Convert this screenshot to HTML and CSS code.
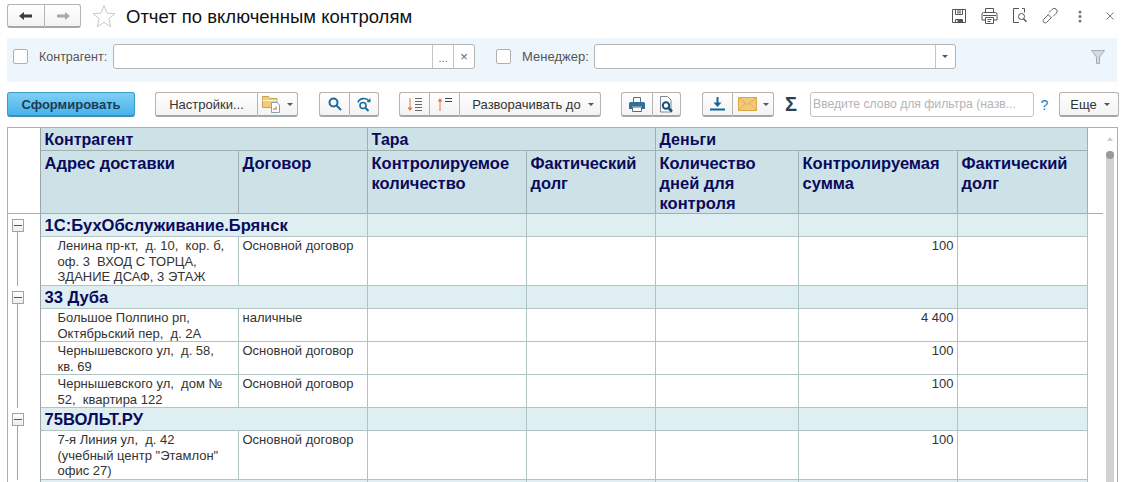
FILE: index.html
```html
<!DOCTYPE html>
<html lang="ru">
<head>
<meta charset="utf-8">
<title>Отчет по включенным контролям</title>
<link rel="stylesheet" href="styles.css">
</head>
<body>
<header class="head">
  <div class="btn-group nav">
    <button class="btn nav-btn"><svg width="16" height="10" viewBox="0 0 16 10"><path d="M1 5l5-4v2.500h8v3H6V9z" fill="#3c3c3c"/></svg></button>
    <button class="btn nav-btn"><svg width="16" height="10" viewBox="0 0 16 10"><path d="M15 5l-5-4v2.500H2v3h8V9z" fill="#a8a8a8"/></svg></button>
  </div>
  <svg class="star" width="24" height="24" viewBox="0 0 24 24"><path d="M12 1.500l3 7.600 8 .6-6.200 5.100 2 7.900L12 18.400 5.200 22.700l2-7.900L1 9.700l8-.6z" fill="none" stroke="#c8c8c8"/></svg>
  <h1 class="title">Отчет по включенным контролям</h1>
  <div class="head-tools">
    <svg width="16" height="16" viewBox="0 0 16 16" fill="none" stroke="#555"><path d="M1.500 1.500h13v13h-13zM4.500 1.500v5h7v-5M6 3h4M6 4.800h4M4.500 14.500v-3h7v3"/><path d="M7 12h4v2.500H7z" fill="#555"/></svg>
    <svg width="17" height="16" viewBox="0 0 17 16" fill="none" stroke="#555"><path d="M4.500 4.500v-4h8v4M1 12V6a1.500 1.500 0 0 1 1.500-1.500h12A1.500 1.500 0 0 1 16 6v6h-3.500M4.500 12H1M4.500 9.500h8v6h-8zM6.500 11.500h4M6.500 13.500h3M2 7.500h13"/></svg>
    <svg width="16" height="16" viewBox="0 0 16 16" fill="none" stroke="#555"><path d="M7 .5H1.500v14H7M10 .5h2.500v4"/><circle cx="9.500" cy="8.500" r="3"/><path d="M11.500 10.800l3 3" stroke-width="1.500"/></svg>
    <svg width="16" height="16" viewBox="0 0 16 16" fill="none" stroke="#666"><path d="M6.500 6.500l-4.800 4.800a2 2 0 0 0 3 3l4.800-4.800M6 6.500l3.500 3.500M7 4.500l3-3a2.200 2.200 0 0 1 4.500 3.500l-3.500 3.500"/></svg>
    <svg class="dots" width="4" height="13" viewBox="0 0 4 13" fill="#777"><circle cx="2" cy="2" r="1.500"/><circle cx="2" cy="6.500" r="1.500"/><circle cx="2" cy="11" r="1.500"/></svg>
    <svg class="close" width="8" height="8" viewBox="0 0 8 8" stroke="#777" fill="none"><path d="M.5.500l7 7M7.500.500l-7 7"/></svg>
  </div>
</header>

<section class="filters">
  <label class="check"></label>
  <span class="f-label f-label-1">Контрагент:</span>
  <div class="field field-1"><span class="f-input"></span><span class="f-btn f-dots">...</span><span class="f-btn f-x">×</span></div>
  <label class="check check-2"></label>
  <span class="f-label f-label-2">Менеджер:</span>
  <div class="field field-2"><span class="f-input"></span><span class="f-btn f-drop"><i class="caret"></i></span></div>
  <svg class="funnel" width="14" height="14" viewBox="0 0 14 14"><path d="M.5.500h13L8.500 7v6.500h-3V7z" fill="#d5dbdf" stroke="#a5adb2"/></svg>
</section>

<section class="toolbar">
  <button class="btn primary">Сформировать</button>
  <div class="btn-group g-set">
    <button class="btn b-set">Настройки...</button>
    <button class="btn b-folder">
      <svg width="20" height="18" viewBox="0 0 20 18"><path d="M.5 1.500h6l1.500 2h7v9H.5z" fill="#f0cd78" stroke="#c9a24b"/><path d="M.5 5.500h14.500" stroke="#fff3c8"/><path d="M9.500 7.500h5.500l2.500 2.500v7.500h-8z" fill="#fff" stroke="#8aa0ad"/><path d="M12 15v-2M14 15v-3.500" stroke="#c0504d"/></svg>
      <i class="caret"></i>
    </button>
  </div>
  <div class="btn-group g-find">
    <button class="btn b-icon"><svg width="14" height="14" viewBox="0 0 14 14" fill="none" stroke="#1f6a9a" stroke-width="2"><circle cx="5.500" cy="5.500" r="4"/><path d="M8.500 8.500l4.500 4.500"/></svg></button>
    <button class="btn b-icon"><svg width="15" height="15" viewBox="0 0 15 15" fill="none" stroke="#1f6a9a" stroke-width="1.600"><path d="M1 5.500a6 5 0 0 1 11-1.500"/><path d="M13.500 1v4.200H9.500z" fill="#1f6a9a" stroke="none"/><circle cx="6" cy="8.500" r="3"/><path d="M8.500 11l3 3" stroke-width="2"/></svg></button>
  </div>
  <div class="btn-group g-sort">
    <button class="btn b-sort"><svg width="16" height="15" viewBox="0 0 16 15" fill="none"><path d="M3 1v12" stroke="#e0783c"/><path d="M.5 10.500L3 14l2.500-3.500z" fill="#e0783c"/><path d="M8 1.500h7M8 4.500h7M8 7.500h7M8 10.500h7M8 13.500h7" stroke="#666"/></svg></button>
    <button class="btn b-sort"><svg width="16" height="15" viewBox="0 0 16 15" fill="none"><path d="M3 14V2" stroke="#e0783c"/><path d="M.5 4.500L3 1l2.500 3.500z" fill="#e0783c"/><path d="M8 1.500h7M8 4.500h7" stroke="#444"/></svg></button>
    <button class="btn b-expand">Разворачивать до<i class="caret"></i></button>
  </div>
  <div class="btn-group g-print">
    <button class="btn b-print"><svg width="16" height="15" viewBox="0 0 16 15"><path d="M4.500 5V.5h7V5" fill="#fff" stroke="#5b6b78"/><path d="M0 6.500A1.500 1.500 0 0 1 1.500 5h13A1.500 1.500 0 0 1 16 6.500V12h-3V9.500H3V12H0z" fill="#2f6f9c"/><path d="M3.500 10h9v4.500h-9z" fill="#fff" stroke="#5b6b78"/></svg></button>
    <button class="btn b-prev"><svg width="15" height="17" viewBox="0 0 15 17" fill="none"><path d="M1.500.5h7l3.500 3.500v12H1.500z" fill="#fff" stroke="#7a8a96"/><circle cx="7" cy="9.500" r="3.200" stroke="#17527a" stroke-width="2"/><path d="M9.500 12l3.500 3.500" stroke="#17527a" stroke-width="2.500"/></svg></button>
  </div>
  <div class="btn-group g-send">
    <button class="btn b-dl"><svg width="15" height="14" viewBox="0 0 15 14"><path d="M7.500 0v7" stroke="#17649a" stroke-width="2"/><path d="M3.500 5.500h8l-4 4.500z" fill="#17649a"/><path d="M0 12.500h15" stroke="#17649a" stroke-width="2"/></svg></button>
    <button class="btn b-mail"><svg width="19" height="14" viewBox="0 0 19 14"><path d="M.5.500h18v13H.5z" fill="#f3c877" stroke="#d9a648"/><path d="M.5.500l9 7 9-7M.5 13.500l7-7.500M18.500 13.500l-7-7.500" fill="none" stroke="#dfae55"/></svg><i class="caret"></i></button>
  </div>
  <span class="sigma">Σ</span>
  <div class="search">Введите слово для фильтра (назв...</div>
  <span class="help">?</span>
  <button class="btn b-more">Еще<i class="caret"></i></button>
</section>

<section class="report">
  <div class="report-scroll">
    <table class="grid">
      <colgroup><col class="c0"><col class="c1"><col class="c2"><col class="c3"><col class="c4"><col class="c5"><col class="c6"><col class="c7"><col class="c8"></colgroup>
      <thead>
        <tr class="h1"><th class="gut" rowspan="2"></th><th colspan="2">Контрагент</th><th colspan="2">Тара</th><th colspan="3">Деньги</th><th class="x" rowspan="2"></th></tr>
        <tr class="h2"><th>Адрес доставки</th><th>Договор</th><th>Контролируемое количество</th><th>Фактический долг</th><th>Количество дней для контроля</th><th>Контролируемая сумма</th><th>Фактический долг</th></tr>
      </thead>
      <tbody>
        <tr class="grp"><td class="gut"><i class="tree-box"></i></td><td colspan="2">1С:БухОбслуживание.Брянск</td><td></td><td></td><td></td><td></td><td></td><td class="x"></td></tr>
        <tr class="r48"><td class="gut"><i class="tree-end"></i></td><td class="addr">Ленина пр-кт, &nbsp;д. 10, &nbsp;кор. б,<br>оф. 3 &nbsp;ВХОД С ТОРЦА,<br>ЗДАНИЕ ДСАФ, 3 ЭТАЖ</td><td>Основной договор</td><td></td><td></td><td></td><td class="num">100</td><td></td><td class="x"></td></tr>
        <tr class="grp"><td class="gut"><i class="tree-box"></i></td><td colspan="2">33 Дуба</td><td></td><td></td><td></td><td></td><td></td><td class="x"></td></tr>
        <tr class="r32"><td class="gut"><i class="tree-mid"></i></td><td class="addr">Большое Полпино рп,<br>Октябрьский пер, &nbsp;д. 2А</td><td>наличные</td><td></td><td></td><td></td><td class="num">4 400</td><td></td><td class="x"></td></tr>
        <tr class="r32"><td class="gut"><i class="tree-mid"></i></td><td class="addr">Чернышевского ул, &nbsp;д. 58,<br>кв. 69</td><td>Основной договор</td><td></td><td></td><td></td><td class="num">100</td><td></td><td class="x"></td></tr>
        <tr class="r32"><td class="gut"><i class="tree-end"></i></td><td class="addr">Чернышевского ул, &nbsp;дом №<br>52, &nbsp;квартира 122</td><td>Основной договор</td><td></td><td></td><td></td><td class="num">100</td><td></td><td class="x"></td></tr>
        <tr class="grp"><td class="gut"><i class="tree-box"></i></td><td colspan="2">75ВОЛЬТ.РУ</td><td></td><td></td><td></td><td></td><td></td><td class="x"></td></tr>
        <tr class="r48"><td class="gut"><i class="tree-end"></i></td><td class="addr">7-я Линия ул, &nbsp;д. 42<br>(учебный центр "Этамлон"<br>офис 27)</td><td>Основной договор</td><td></td><td></td><td></td><td class="num">100</td><td></td><td class="x"></td></tr>
        <tr class="grp"><td class="gut"></td><td colspan="2"></td><td></td><td></td><td></td><td></td><td></td><td class="x"></td></tr>
      </tbody>
    </table>
  </div>
  <div class="scrollbar"><i class="sb-up"></i><i class="sb-thumb"></i></div>
</section>
</body>
</html>
```
FILE: styles.css
```css
* { box-sizing: border-box; }
html, body { margin: 0; padding: 0; height: 100%; overflow: hidden; }
body { width: 1121px; height: 482px; background: #fff; font-family: "Liberation Sans", Arial, sans-serif; color: #333; font-size: 12px; }
button { font-family: inherit; margin: 0; }

.head { display: flex; align-items: center; height: 38px; padding: 4px 0 10px 7px; }
.title { font-size: 18.500px; font-weight: 400; color: #111; margin: 2px 0 0 10px; white-space: nowrap; }
.star { margin-left: 11px; }
.head-tools { display: flex; align-items: center; margin-left: auto; }
.head-tools svg { margin-right: 14px; }
.head-tools svg.dots { margin: 0 24px 0 6px; }
.head-tools svg.close { margin: 0 7px 0 0; }

.btn { height: 25px; border: 1px solid #b4b4b4; border-bottom: 2px solid #a6a6a6; border-radius: 3px; background: linear-gradient(#fff, #f3f3f3); color: #333; font-size: 13px; padding: 0; display: inline-flex; align-items: center; justify-content: center; white-space: nowrap; }
.btn-group { display: flex; }
.btn-group .btn { border-radius: 0; border-right-width: 0; }
.btn-group .btn:first-child { border-radius: 3px 0 0 3px; }
.btn-group .btn:last-child { border-radius: 0 3px 3px 0; border-right-width: 1px; }
.nav { height: 24px; }
.nav-btn { height: 24px; width: 37px; }

.filters { display: flex; align-items: center; height: 44px; margin: 0 4px 0 7px; background: #eef6fd; padding: 0 0 7px 6px; }
.check { width: 15px; height: 15px; border: 1px solid #b0b0b0; border-radius: 2px; background: #fff; flex: none; }
.check-2 { margin-left: 21px; }
.f-label { color: #555; }
.f-label-1 { margin-left: 11px; font-size: 12.500px; }
.f-label-2 { margin-left: 11px; font-size: 13px; }
.field { display: flex; height: 25px; border: 1px solid #b4b4b4; border-radius: 3px; background: #fff; margin-left: 6px; }
.field-1 { width: 362px; }
.field-2 { width: 362px; margin-left: 5px; }
.f-input { flex: 1; }
.f-btn { border-left: 1px solid #c4c4c4; display: flex; align-items: center; justify-content: center; color: #666; font-size: 11px; flex: none; }
.f-dots { width: 21px; padding-top: 3px; }
.f-x { width: 21px; font-size: 13px; }
.f-drop { width: 20px; }
.funnel { margin-left: auto; margin-right: 12px; }
.caret { display: inline-block; width: 0; height: 0; border-left: 3px solid transparent; border-right: 3px solid transparent; border-top: 3px solid #555; }

.toolbar { display: flex; align-items: center; height: 25px; margin: 10px 0 0 7px; }
.primary { width: 128px; border: 1px solid #3f9cc6; border-bottom: 2px solid #3c8fb5; background: linear-gradient(#7ed0f6, #49b2e8); font-weight: 700; color: #1c3c55; }
.g-set { margin-left: 20px; }
.b-set { width: 102px; }
.b-folder { width: 41px; gap: 5px; }
.g-find { margin-left: 21px; }
.b-icon { width: 30px; }
.g-sort { margin-left: 20px; }
.b-sort { width: 30px; }
.b-expand { width: 142px; gap: 7px; padding-left: 6px; }
.g-print { margin-left: 20px; }
.b-print { width: 31px; }
.b-prev { width: 29px; }
.g-send { margin-left: 21px; }
.b-dl { width: 30px; }
.b-mail { width: 42px; gap: 6px; }
.sigma { width: 36px; padding-right: 2px; text-align: center; font-size: 20px; font-weight: 700; color: #2f4050; }
.search { width: 224px; height: 25px; border: 1px solid #c4c4c4; border-radius: 3px; background: #fff; color: #b4b4b4; font-size: 12.200px; line-height: 23px; padding-left: 2px; white-space: nowrap; overflow: hidden; }
.help { width: 25px; padding-right: 4px; text-align: center; font-size: 14px; color: #1a7fc1; }
.b-more { width: 60px; gap: 7px; padding-left: 2px; }

.report { display: flex; height: 355px; margin: 10px 0 0 7px; border-top: 1px solid #a9b0b0; border-left: 1px solid #a9b0b0; border-right: 1px solid #a9b0b0; width: 1111px; }
.report-scroll { width: 1095px; overflow: hidden; flex: none; }
.grid { table-layout: fixed; border-collapse: collapse; width: 1095px; margin-top: -1px; }
.c0 { width: 32px; }
.c1 { width: 198px; }
.c2 { width: 129px; }
.c3 { width: 159px; }
.c4 { width: 129px; }
.c5 { width: 143px; }
.c6 { width: 159px; }
.c7 { width: 130px; }
.c8 { width: 16px; }
.grid th, .grid td { border: 1px solid #b0c4c4; padding: 1px 3px 0 4px; vertical-align: top; overflow: hidden; }
.grid th { background: #cde2e6; color: #0a0a5c; font-size: 16.500px; text-align: left; line-height: 20px; font-weight: 700; border-color: #9fb0b0; padding: 2px 4px 0; }
.grid .h1 th { font-size: 16px; }
.grid .h1 { height: 23px; }
.grid .h2 { height: 63px; }
.grid th.gut, .grid td.gut { background: #fff; border-top: 0; border-left: 0; border-bottom: 0; border-right-color: #9aa5a5; padding: 0; position: relative; overflow: visible; }
.grid thead th.gut { border-bottom: 1px solid #9fb0b0; }
.grid th.x, .grid td.x { background: #fff; border-top: 0; border-right: 0; border-bottom: 0; }
.grid thead th.x { border-bottom: 1px solid #9fb0b0; }
.grp { height: 23px; }
.r32 { height: 33px; }
.r48 { height: 49px; }
.grid tbody td { font-size: 13px; line-height: 15.500px; }
.grid tbody .grp td { background: #deeef1; font-size: 16.600px; font-weight: 700; color: #0a0a5c; line-height: 20px; padding: 2px 4px 0; white-space: nowrap; }
.grid tbody .grp td.gut, .grid tbody .grp td.x { background: #fff; padding: 0; }
.grid td.addr { padding-left: 17px; white-space: nowrap; }
.grid td.num { text-align: right; padding-right: 3px; }
.tree-box { position: absolute; left: 4px; top: 5px; width: 12px; height: 13px; border: 1px solid #9aa5a5; background: linear-gradient(#fff, #eee); z-index: 1; }
.tree-box::after { content: ""; position: absolute; left: 1px; right: 1px; top: 5px; height: 1px; background: #555; }
.tree-box::before { content: ""; position: absolute; left: 4px; top: 12px; width: 1px; height: 12px; background: #9aa5a5; }
.tree-mid, .tree-end { position: absolute; left: 9px; top: -1px; width: 23px; border-left: 1px solid #9aa5a5; height: calc(100% + 2px); display: block; }
.tree-end { border-bottom: 1px solid #9aa5a5; }

.scrollbar { flex: none; width: 15px; position: relative; }
.sb-up { position: absolute; left: 4px; top: 9px; width: 0; height: 0; border-left: 3px solid transparent; border-right: 3px solid transparent; border-bottom: 4px solid #ccc; }
.sb-thumb { position: absolute; left: 3px; top: 23px; width: 8px; height: 332px; background: #d2d2d2; border-radius: 4px 4px 0 0; }
.sb-thumb::before { content: ""; position: absolute; left: 0; top: 0; width: 8px; height: 8px; border-radius: 50%; background: #999; }
```
